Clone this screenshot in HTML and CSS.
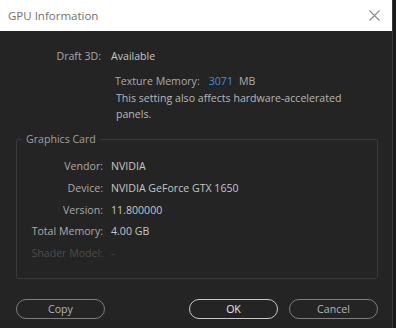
FILE: index.html
```html
<!DOCTYPE html>
<html lang="en">
<head>
  <meta charset="UTF-8" />
  <title>GPU Information</title>
  <link rel="stylesheet" href="styles.css">
</head>
<body>
  <div class="dialog">
    <div class="titlebar">
      <span class="title">GPU Information</span>
      <svg class="close" width="11" height="11" viewBox="0 0 11 11">
        <path d="M0.5 0.5 L10.5 10.5 M10.5 0.5 L0.5 10.5" stroke="#8a8a8a" stroke-width="1.1" fill="none" />
      </svg>
    </div>

    <div class="content">
      <div class="row top-row">
        <span class="label">Draft 3D:</span>
        <span class="value">Available</span>
      </div>

      <div class="texture">
        <div class="texture-line">
          <span class="label">Texture Memory:</span>
          <span class="mem">3071</span>
          <span class="label">MB</span>
        </div>
        <p class="note">This setting also affects hardware-accelerated panels.</p>
      </div>

      <fieldset class="group">
        <legend>Graphics Card</legend>
        <div class="row">
          <span class="label">Vendor:</span>
          <span class="value">NVIDIA</span>
        </div>
        <div class="row">
          <span class="label">Device:</span>
          <span class="value">NVIDIA GeForce GTX 1650</span>
        </div>
        <div class="row">
          <span class="label">Version:</span>
          <span class="value">11.800000</span>
        </div>
        <div class="row">
          <span class="label">Total Memory:</span>
          <span class="value">4.00 GB</span>
        </div>
        <div class="row disabled">
          <span class="label">Shader Model:</span>
          <span class="value">-</span>
        </div>
      </fieldset>

      <div class="buttons">
        <button class="btn">Copy</button>
        <div class="right-buttons">
          <button class="btn btn-default">OK</button>
          <button class="btn">Cancel</button>
        </div>
      </div>
    </div>
  </div>
</body>
</html>
```

FILE: styles.css
```css
body {
  margin: 0;
  background: #1a1a1a;
  font-family: "Open Sans", "Noto Sans", sans-serif;
  font-size: 10.6px;
  width: 396px;
  height: 328px;
  overflow: hidden;
}

.dialog {
  width: 392px;
  height: 328px;
  background: #242424;
  border-right: 1px solid #3a3a3a;
}

.titlebar {
  height: 31px;
  background: #fff;
  display: flex;
  align-items: center;
  justify-content: space-between;
  padding: 0 12px 0 8px;
}

.title {
  color: #707070;
  font-size: 11.5px;
}

.close {
  display: block;
}

.content {
  padding: 17px 14px 0 16px;
}

.row {
  display: grid;
  grid-template-columns: 85px 1fr;
  column-gap: 10px;
  height: 16px;
  line-height: 16px;
}

.label {
  color: #aaaaaa;
  text-align: right;
  white-space: nowrap;
}

.value {
  color: #c6c6c6;
  white-space: nowrap;
}

.texture {
  margin: 9px 0 0 99px;
}

.texture-line {
  display: flex;
  gap: 6px;
  height: 16px;
  line-height: 16px;
}

.texture-line .mem {
  color: #3d8ee0;
  margin-left: 3px;
}

.note {
  margin: 2px 0 0 1px;
  color: #b8b8b8;
  line-height: 15.5px;
  width: 240px;
}

.group {
  margin: 10px 0 0 0;
  border: 1px solid #393939;
  border-radius: 2px;
  padding: 12px 0 12px 0;
  height: 121px;
}

.group legend {
  color: #a0a0a0;
  padding: 0 4px;
  margin-left: 5px;
}

.group .row {
  grid-template-columns: 86px 1fr;
  column-gap: 8px;
  margin-bottom: 5.8px;
}

.row.disabled .label,
.row.disabled .value {
  color: #4c4c4c;
}

.buttons {
  display: flex;
  justify-content: space-between;
  margin-top: 20px;
}

.right-buttons {
  display: flex;
  gap: 11px;
}

.btn {
  width: 89px;
  height: 20px;
  border-radius: 10px;
  border: 1px solid #7d7d7d;
  background: transparent;
  color: #b4b4b4;
  font-family: "Open Sans", "Noto Sans", sans-serif;
  font-size: 10.6px;
  padding: 0;
}

.btn-default {
  border-color: #c8c8c8;
  color: #e8e8e8;
}
```
